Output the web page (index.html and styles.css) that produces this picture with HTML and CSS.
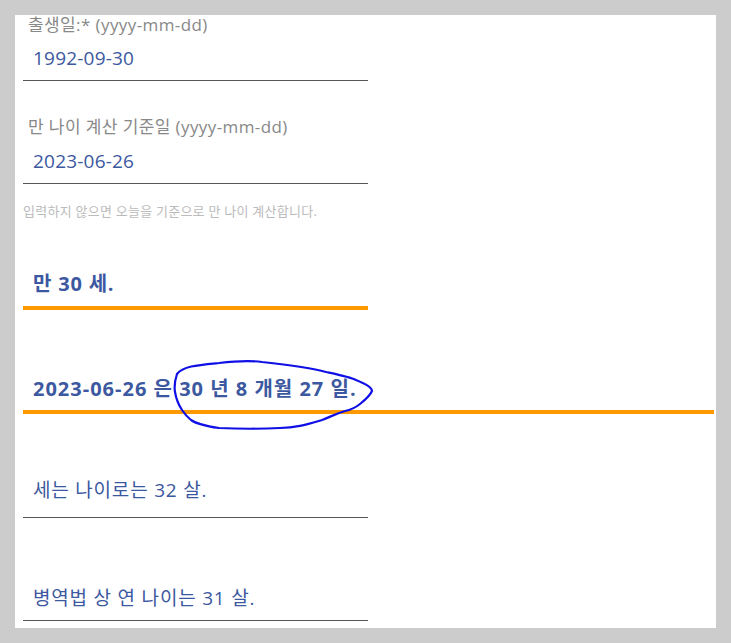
FILE: index.html
```html
<!DOCTYPE html>
<html>
<head>
    <meta charset="utf-8">
    <link rel="stylesheet" href="styles.css">
</head>
<body>
    <div class="panel">
        <div class="field first">
            <div class="label">출생일:* (yyyy-mm-dd)</div>
            <div class="value">1992-09-30</div>
        </div>
        <div class="field second">
            <div class="label">만 나이 계산 기준일 (yyyy-mm-dd)</div>
            <div class="value">2023-06-26</div>
        </div>
        <div class="hint">입력하지 않으면 오늘을 기준으로 만 나이 계산합니다.</div>

        <div class="result age">만 30 세.</div>
        <div class="result span">2023-06-26 은 30 년 8 개월 27 일.</div>

        <div class="field plain third">
            <div class="value">세는 나이로는 32 살.</div>
        </div>
        <div class="field plain fourth">
            <div class="value">병역법 상 연 나이는 31 살.</div>
        </div>
    </div>

    <svg class="scribble" width="731" height="643" viewBox="0 0 731 643">
        <path d="M177 374 C183 366 198 365 219 363 C236 361 248 360 262 362 C290 365 312 368 326 372 C340 375 350 377 356 380 C366 384 372 388 372 391 C370 396 365 400 360 404 C355 408 350 410 345 411 C335 414 330 417 322 420 C305 425 295 428 280 428 C260 429 240 429 219 428 C205 426 195 423 191 420 C186 416 184 413 182 410 C178 404 176 398 175 392 C174 386 175 380 177 374"
              fill="none" stroke="#1010e6" stroke-width="2.2" stroke-linecap="round"/>
    </svg>
</body>
</html>
```

FILE: styles.css
```css
html, body {
    margin: 0;
    height: 100%;
    overflow: hidden;
    background-color: #cccccc;
}
body {
    padding: 15px 15px 0 15px;
    box-sizing: border-box;
    font-family: "Open Sans", "Noto Sans CJK KR", sans-serif;
}
.panel {
    background-color: #fff;
    width: 701px;
    height: 613px;
    padding: 0 2px 0 8px;
    box-sizing: border-box;
    display: flex;
    flex-direction: column;
}
.field {
    width: 345px;
}
.label {
    color: #888;
    font-size: 17px;
    letter-spacing: 0.4px;
    line-height: 20px;
    padding-left: 5px;
}
.value {
    color: #3c58a0;
    font-size: 19px;
    letter-spacing: 0.2px;
    line-height: 22px;
    padding: 12px 10px 11px 10px;
    border-bottom: 1px solid #555;
}
.second {
    margin-top: 36px;
}
.second .value {
    padding-top: 13px;
}
.hint {
    margin-top: 20px;
    font-size: 13px;
    letter-spacing: 0.25px;
    line-height: 14px;
    color: #bbb;
}
.result {
    color: #3c58a0;
    font-weight: bold;
    font-size: 20px;
    letter-spacing: 0.8px;
    line-height: 24px;
    padding-left: 10px;
    border-bottom: 4px solid #ff9900;
}
.age {
    width: 345px;
    box-sizing: border-box;
    margin-top: 54px;
    padding-bottom: 10px;
}
.span {
    margin-top: 67px;
    padding-bottom: 9px;
    letter-spacing: 1px;
}
.plain .value {
    padding-top: 0;
    letter-spacing: 0.8px;
}
.third {
    margin-top: 65px;
}
.third .value {
    padding-bottom: 16px;
}
.fourth {
    margin-top: 69px;
}
.scribble {
    position: absolute;
    left: 0;
    top: 0;
    pointer-events: none;
}
```
